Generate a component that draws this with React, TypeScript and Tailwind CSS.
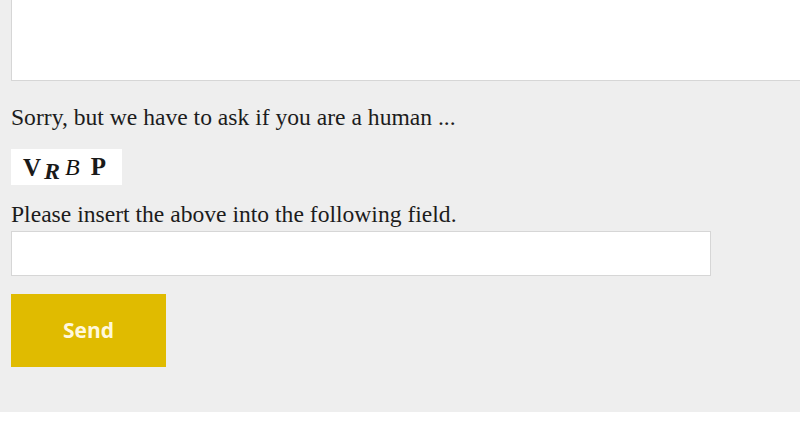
import React from 'react';

export default function App() {
  return (
    <div className="w-[800px] h-[445px] overflow-hidden bg-white" style={{ fontFamily: '"Liberation Serif", "Times New Roman", serif' }}>
      <div className="bg-[#eeeeee] h-[412px] pl-[11px] flex flex-col">
        {/* message box, scrolled so its top is off screen */}
        <textarea
          className="block w-[800px] h-[83px] -mt-[2px] bg-white border border-[#d6d6d6] outline-none resize-none shrink-0"
          readOnly
        />
        <p className="mt-[23px] text-[23.6px] leading-[26px] text-[#1c1c1c] whitespace-nowrap">
          Sorry, but we have to ask if you are a human ...
        </p>
        {/* captcha image */}
        <div className="mt-[19px] w-[111px] h-[36px] bg-white flex items-start pl-[12px] pt-[6px] text-[#1a1a1a]">
          <span className="text-[25px] leading-none font-bold">V</span>
          <span className="text-[24px] leading-none font-bold italic ml-[3px] mt-[4px]">R</span>
          <span className="text-[24px] leading-none italic ml-[5px] text-[#111]">B</span>
          <span className="text-[25px] leading-none font-bold ml-[11px] -mt-[1px]">P</span>
        </div>
        <p className="mt-[16px] text-[23.6px] leading-[26px] text-[#1c1c1c] whitespace-nowrap">
          Please insert the above into the following field.
        </p>
        <input
          type="text"
          className="mt-[4px] w-[700px] h-[45px] bg-white border border-[#d6d6d6] outline-none"
        />
        <button
          className="mt-[18px] w-[155px] h-[73px] bg-[#e0bb00] text-[#fff8dc] text-[21px] font-bold"
          style={{ fontFamily: '"Open Sans", "Liberation Sans", sans-serif' }}
        >
          Send
        </button>
      </div>
    </div>
  );
}
